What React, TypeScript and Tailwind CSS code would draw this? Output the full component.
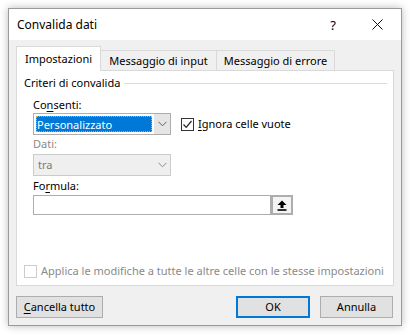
import React from 'react';

const font = { fontFamily: '"Noto Sans", "Open Sans", sans-serif' };

const Chevron: React.FC<{ color?: string }> = ({ color = '#606060' }) => (
  <svg width="9" height="6" viewBox="0 0 9 6" fill="none">
    <path d="M0.5 0.8 L4.5 4.8 L8.5 0.8" stroke={color} strokeWidth="1" />
  </svg>
);

const Check: React.FC = () => (
  <svg width="11" height="11" viewBox="0 0 11 11" fill="none">
    <path d="M1.5 5.5 L4.2 8.3 L9.5 2" stroke="#222" strokeWidth="1.2" />
  </svg>
);

const App: React.FC = () => {
  return (
    <div className="w-[410px] h-[335px] bg-white p-2 text-[11px] leading-[16px] text-black whitespace-nowrap" style={font}>
      <div className="w-[394px] h-[318px] flex flex-col border border-[#9a9a9a] shadow-[0_0_8px_rgba(0,0,0,0.28)]">
        {/* title bar */}
        <div className="h-[31px] bg-white flex items-center pl-[8px] shrink-0">
          <span className="text-[12px]">Convalida dati</span>
          <span className="ml-auto mr-[36px] text-[13px]">?</span>
          <svg width="11" height="11" viewBox="0 0 11 11" className="mr-[18px]">
            <path d="M0.5 0.5 L10.5 10.5 M10.5 0.5 L0.5 10.5" stroke="#111" strokeWidth="1" />
          </svg>
        </div>

        {/* body */}
        <div className="flex-1 bg-[#f0f0f0] flex flex-col px-[7px] pt-[6px]">
          {/* tabs */}
          <div className="flex items-end h-[25px] relative z-10 -mb-px">
            <div className="h-[25px] w-[85px] bg-white border border-[#d9d9d9] border-b-0 flex items-center justify-center pb-[1px]">
              Impostazioni
            </div>
            <div className="h-[21px] w-[116px] bg-[#f0f0f0] border border-[#d9d9d9] border-l-0 flex items-center justify-center">
              Messaggio di input
            </div>
            <div className="h-[21px] w-[118px] bg-[#f0f0f0] border border-[#d9d9d9] border-l-0 flex items-center justify-center">
              Messaggio di errore
            </div>
          </div>

          {/* panel */}
          <div className="h-[216px] bg-white border border-[#d9d9d9] flex flex-col">
            <div className="flex items-center mt-[4px] h-[16px] pl-[7px] pr-[6px]">
              <span>Criteri di convalida</span>
              <div className="flex-1 h-px bg-[#dcdcdc] ml-[4px]" />
            </div>

            <div className="flex flex-col pl-[16px]">
              <div className="mt-[6px] h-[16px]">
                Co<span className="underline underline-offset-2">n</span>senti:
              </div>
              <div className="flex items-center">
                <div className="w-[138px] h-[22px] border border-[#adadad] bg-[#e5e5e5] flex items-stretch">
                  <div className="w-[120px] bg-white p-[2px]">
                    <div className="h-full bg-[#0078d7] text-white outline-1 outline-dotted outline-[#f0a040] -outline-offset-1 flex items-center pl-[1px] leading-none">
                      Personalizzato
                    </div>
                  </div>
                  <div className="flex-1 flex items-center justify-center">
                    <Chevron />
                  </div>
                </div>
                <div className="ml-[10px] w-[13px] h-[13px] border border-[#333] bg-white flex items-center justify-center">
                  <Check />
                </div>
                <span className="ml-[4px]">
                  <span className="underline underline-offset-2">I</span>gnora celle vuote
                </span>
              </div>

              <div className="mt-[1px] h-[16px] text-[#8a8a8a]">Dati:</div>
              <div className="mt-[2px] w-[138px] h-[22px] border border-[#cccccc] bg-[#efefef] flex items-stretch">
                <div className="w-[120px] flex items-center pl-[4px] text-[#7a7a7a]">tra</div>
                <div className="flex-1 flex items-center justify-center">
                  <Chevron color="#8a8a8a" />
                </div>
              </div>

              <div className="mt-[2px] h-[16px]">
                Fo<span className="underline underline-offset-2">r</span>mula:
              </div>
              <div className="mt-[1px] flex items-stretch h-[20px]">
                <div className="w-[238px] bg-white border border-[#adadad]" />
                <div className="w-[22px] border-2 border-[#adadad] bg-[#f4f4f4] flex items-center justify-center">
                  <svg width="10" height="11" viewBox="0 0 10 11">
                    <path d="M5 0.5 L9.5 5 L6.5 5 L6.5 8 L3.5 8 L3.5 5 L0.5 5 Z" fill="#000" />
                    <rect x="0.5" y="9.2" width="9" height="1.6" fill="#000" />
                  </svg>
                </div>
              </div>
            </div>

            <div className="flex-1" />
            <div className="flex items-center pl-[7px] mb-[6px] h-[16px]">
              <div className="w-[13px] h-[13px] border border-[#cccccc] bg-white" />
              <span className="ml-[4px] text-[#8a8a8a]">Applica le modifiche a tutte le altre celle con le stesse impostazioni</span>
            </div>
          </div>

          {/* buttons */}
          <div className="flex items-center mt-[10px]">
            <button className="w-[87px] h-[22px] bg-[#e1e1e1] border border-[#adadad] flex items-center justify-center">
              <span className="underline underline-offset-2">C</span>ancella tutto
            </button>
            <button className="ml-auto w-[74px] h-[22px] bg-[#e1e1e1] border-2 border-[#0078d7] flex items-center justify-center">
              OK
            </button>
            <button className="ml-[10px] w-[73px] h-[22px] bg-[#e1e1e1] border border-[#adadad] flex items-center justify-center mr-[1px]">
              Annulla
            </button>
          </div>
        </div>
      </div>
    </div>
  );
};

export default App;
